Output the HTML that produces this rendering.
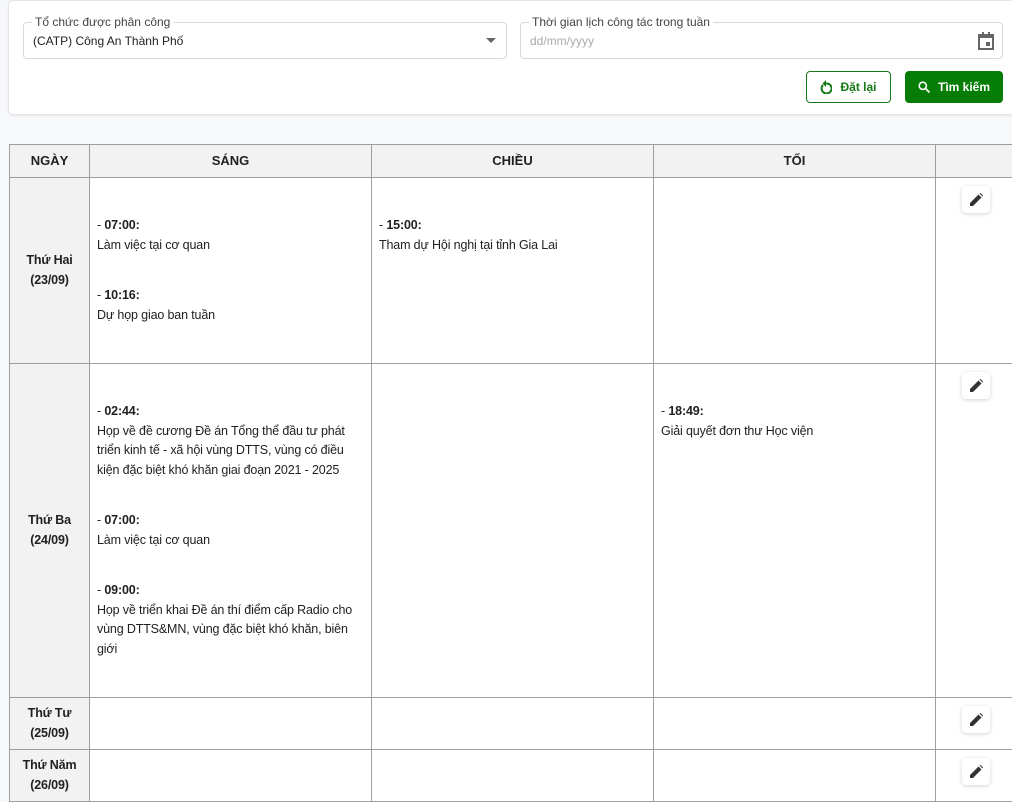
<!DOCTYPE html>
<html><head><meta charset="utf-8"><style>
*{box-sizing:border-box}
body{margin:0;background:#f7f8fa;font-family:"Liberation Sans",sans-serif;font-size:13px;color:#212121;width:1012px;height:797px;overflow:hidden;position:relative}
.card{position:absolute;left:8px;top:0;width:1014px;height:115px;background:#fff;border:1px solid #e3e5e8;border-radius:5px;box-shadow:0 1px 2px rgba(0,0,0,.08)}
.fld{position:absolute;top:21px;height:37px;border:1px solid #d6d8dc;border-radius:4px}
.lbl{position:absolute;top:-8px;left:8px;background:#fff;padding:0 3px;font-size:12px;color:#444}
.val{position:absolute;left:9px;top:11px;font-size:12px}
.btn{position:absolute;top:70px;height:32px;border-radius:4px;font-weight:bold;font-size:12px;display:flex;align-items:center;justify-content:center;gap:8px}
table{position:absolute;left:9px;top:144px;border-collapse:collapse;table-layout:fixed;width:1016px}
td,th{border:1px solid #9e9e9e;padding:0 7px;vertical-align:middle;line-height:19.5px;background:#fff;font-size:12.5px;letter-spacing:-0.15px}
th{background:#f2f2f2;height:33px;font-size:13px;letter-spacing:0}
td.d{background:#f2f2f2;text-align:center;font-weight:bold;padding:0 2px}
.e{margin-bottom:31px}.e:last-child{margin-bottom:0}
td.x{vertical-align:top;position:relative;padding:0}
.ed{position:absolute;left:26px;top:8px;width:28px;height:27px;background:#fff;border-radius:4px;box-shadow:0 1px 4px rgba(0,0,0,.18);display:flex;align-items:center;justify-content:center}
</style></head><body>
<div class="card">
 <div class="fld" style="left:14px;width:484px"><span class="lbl">Tổ chức được phân công</span><span class="val">(CATP) Công An Thành Phố</span>
  <svg style="position:absolute;right:10px;top:15px" width="10" height="6"><path d="M0 0h10L5 5z" fill="#666"/></svg></div>
 <div class="fld" style="left:511px;width:483px"><span class="lbl">Thời gian lịch công tác trong tuần</span><span class="val" style="color:#aaa">dd/mm/yyyy</span>
  <svg style="position:absolute;right:8px;top:9px" width="16" height="18" viewBox="0 0 16 18"><path d="M1 3h14v14H1z" fill="none" stroke="#666" stroke-width="2"/><path d="M1 2h14v4H1z" fill="#666"/><rect x="4" y="0" width="2" height="3" fill="#666"/><rect x="10" y="0" width="2" height="3" fill="#666"/><rect x="8" y="10" width="4" height="4" fill="#666"/></svg></div>
 <div class="btn" style="left:797px;width:85px;border:1px solid #157a15;color:#157a15"><svg width="12" height="14" viewBox="0 0 12 14"><path d="M3 5A5 5 0 1 0 6 3.5" fill="none" stroke="#157a15" stroke-width="2"/><path d="M6 0v7L2.5 3.5z" fill="#157a15"/></svg>Đặt lại</div>
 <div class="btn" style="left:896px;width:98px;background:#067d06;color:#fff"><svg width="12" height="12" viewBox="0 0 12 12"><circle cx="4.8" cy="4.8" r="3.6" fill="none" stroke="#fff" stroke-width="1.6"/><path d="M7.5 7.5l4 4" stroke="#fff" stroke-width="1.8"/></svg>Tìm kiếm</div>
</div>
<table>
<colgroup><col style="width:80px"><col style="width:282px"><col style="width:282px"><col style="width:282px"><col style="width:90px"></colgroup>
<tr><th>NGÀY</th><th>SÁNG</th><th>CHIỀU</th><th>TỐI</th><th></th></tr>
<tr style="height:186px"><td class="d">Thứ Hai<br>(23/09)</td>
<td><div class="e">- <b>07:00:</b><br>Làm việc tại cơ quan</div><div class="e">- <b>10:16:</b><br>Dự họp giao ban tuần</div></td>
<td style="vertical-align:top;padding-top:38px">- <b>15:00:</b><br>Tham dự Hội nghị tại tỉnh Gia Lai</td><td></td>
<td class="x"><div class="ed"><svg width="13" height="13" viewBox="0 0 13 13"><path d="M0 13v-3L8.5 1.5l3 3L3 13zM9.5.5l1-.5 2.5 2.5-.5 1z" fill="#333"/></svg></div></td></tr>
<tr style="height:334px"><td class="d">Thứ Ba<br>(24/09)</td>
<td><div class="e">- <b>02:44:</b><br>Họp về đề cương Đề án Tổng thể đầu tư phát triển kinh tế - xã hội vùng DTTS, vùng có điều kiện đặc biệt khó khăn giai đoạn 2021 - 2025</div><div class="e">- <b>07:00:</b><br>Làm việc tại cơ quan</div><div class="e">- <b>09:00:</b><br>Họp về triển khai Đề án thí điểm cấp Radio cho vùng DTTS&amp;MN, vùng đặc biệt khó khăn, biên giới</div></td>
<td></td><td style="vertical-align:top;padding-top:38px">- <b>18:49:</b><br>Giải quyết đơn thư Học viện</td>
<td class="x"><div class="ed"><svg width="13" height="13" viewBox="0 0 13 13"><path d="M0 13v-3L8.5 1.5l3 3L3 13zM9.5.5l1-.5 2.5 2.5-.5 1z" fill="#333"/></svg></div></td></tr>
<tr style="height:52px"><td class="d">Thứ Tư<br>(25/09)</td><td></td><td></td><td></td>
<td class="x"><div class="ed"><svg width="13" height="13" viewBox="0 0 13 13"><path d="M0 13v-3L8.5 1.5l3 3L3 13zM9.5.5l1-.5 2.5 2.5-.5 1z" fill="#333"/></svg></div></td></tr>
<tr style="height:52px"><td class="d">Thứ Năm<br>(26/09)</td><td></td><td></td><td></td>
<td class="x"><div class="ed"><svg width="13" height="13" viewBox="0 0 13 13"><path d="M0 13v-3L8.5 1.5l3 3L3 13zM9.5.5l1-.5 2.5 2.5-.5 1z" fill="#333"/></svg></div></td></tr>
</table>
</body></html>
